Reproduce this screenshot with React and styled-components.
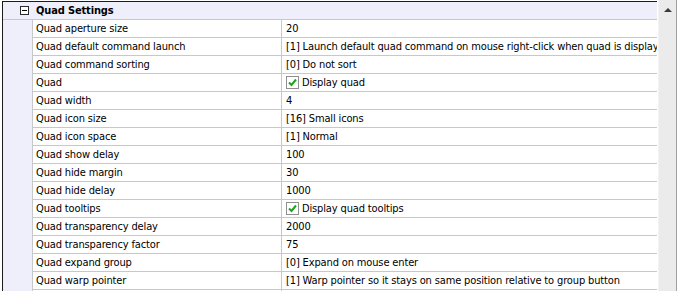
import React from "react";
import styled, { createGlobalStyle } from "styled-components";

const GlobalStyle = createGlobalStyle`
  html, body {
    margin: 0;
    padding: 0;
    background: #ffffff;
  }
  body {
    font-family: "DejaVu Sans Condensed", "DejaVu Sans", sans-serif;
    font-size: 11px;
    letter-spacing: -0.14px;
    color: #000000;
  }
`;

const Frame = styled.div`
  width: 677px;
  height: 291px;
  display: flex;
  overflow: hidden;
  background: #ffffff;
`;

const Grid = styled.div`
  margin: 1px 0 0 2px;
  width: 655px;
  border-top: 1px solid #1b1b1b;
  border-left: 1px solid #1b1b1b;
  overflow: hidden;
  display: flex;
  flex-direction: column;
`;

const HeaderRow = styled.div`
  height: 17px;
  flex: none;
  display: flex;
  align-items: center;
  background: #efeffb;
  border-bottom: 1px solid #c8c8c8;
`;

const Toggle = styled.span`
  width: 7px;
  height: 7px;
  margin-left: 17px;
  border: 1px solid #2b2b2b;
  background: #ffffff;
  position: relative;
  flex: none;

  &::after {
    content: "";
    position: absolute;
    left: 1px;
    top: 3px;
    width: 5px;
    height: 1px;
    background: #000000;
  }
`;

const GroupTitle = styled.span`
  margin-left: 7px;
  font-weight: bold;
  white-space: nowrap;
`;

const Row = styled.div`
  height: 18px;
  flex: none;
  display: grid;
  grid-template-columns: 29px 249px 1fr;
  background: #efeffb;
`;

const Cell = styled.div`
  display: flex;
  align-items: center;
  padding-left: ${(p) => (p.$value ? "4px" : "3px")};
  background: #ffffff;
  border-left: 1px solid #c8c8c8;
  border-bottom: 1px solid #c8c8c8;
  white-space: nowrap;
  overflow: hidden;
`;

const Margin = styled.div``;

const CheckBox = styled.span`
  width: 11px;
  height: 11px;
  border: 1px solid #8f8f8f;
  background: #ffffff;
  margin-right: 3px;
  flex: none;
  display: flex;
  align-items: center;
  justify-content: center;
`;

const Scrollbar = styled.div`
  width: 17px;
  margin-left: 1px;
  background: #ebebeb;
  border-left: 1px solid #f3f3f3;
  border-right: 1px solid #a0a0a0;
  position: relative;
`;

const UpArrow = styled.span`
  position: absolute;
  left: 5px;
  top: 8px;
  width: 0;
  height: 0;
  border-left: 4px solid transparent;
  border-right: 4px solid transparent;
  border-bottom: 4px solid #3a3a3a;
`;

const rows = [
  ["Quad aperture size", "20"],
  ["Quad default command launch", "[1] Launch default quad command on mouse right-click when quad is displayed"],
  ["Quad command sorting", "[0] Do not sort"],
  ["Quad", "Display quad", true],
  ["Quad width", "4"],
  ["Quad icon size", "[16] Small icons"],
  ["Quad icon space", "[1] Normal"],
  ["Quad show delay", "100"],
  ["Quad hide margin", "30"],
  ["Quad hide delay", "1000"],
  ["Quad tooltips", "Display quad tooltips", true],
  ["Quad transparency delay", "2000"],
  ["Quad transparency factor", "75"],
  ["Quad expand group", "[0] Expand on mouse enter"],
  ["Quad warp pointer", "[1] Warp pointer so it stays on same position relative to group button"],
  ["", ""],
];

const Check = () => (
  <CheckBox>
    <svg width="9" height="9" viewBox="0 0 9 9">
      <path d="M1 4.5 L3.5 7 L8 1.5" fill="none" stroke="#21a121" strokeWidth="2" />
    </svg>
  </CheckBox>
);

export default function App() {
  return (
    <Frame>
      <GlobalStyle />
      <Grid>
        <HeaderRow>
          <Toggle />
          <GroupTitle>Quad Settings</GroupTitle>
        </HeaderRow>
        {rows.map(([name, value, checked], i) => (
          <Row key={i}>
            <Margin />
            <Cell>{name}</Cell>
            <Cell $value>
              {checked && <Check />}
              {value}
            </Cell>
          </Row>
        ))}
      </Grid>
      <Scrollbar>
        <UpArrow />
      </Scrollbar>
    </Frame>
  );
}
